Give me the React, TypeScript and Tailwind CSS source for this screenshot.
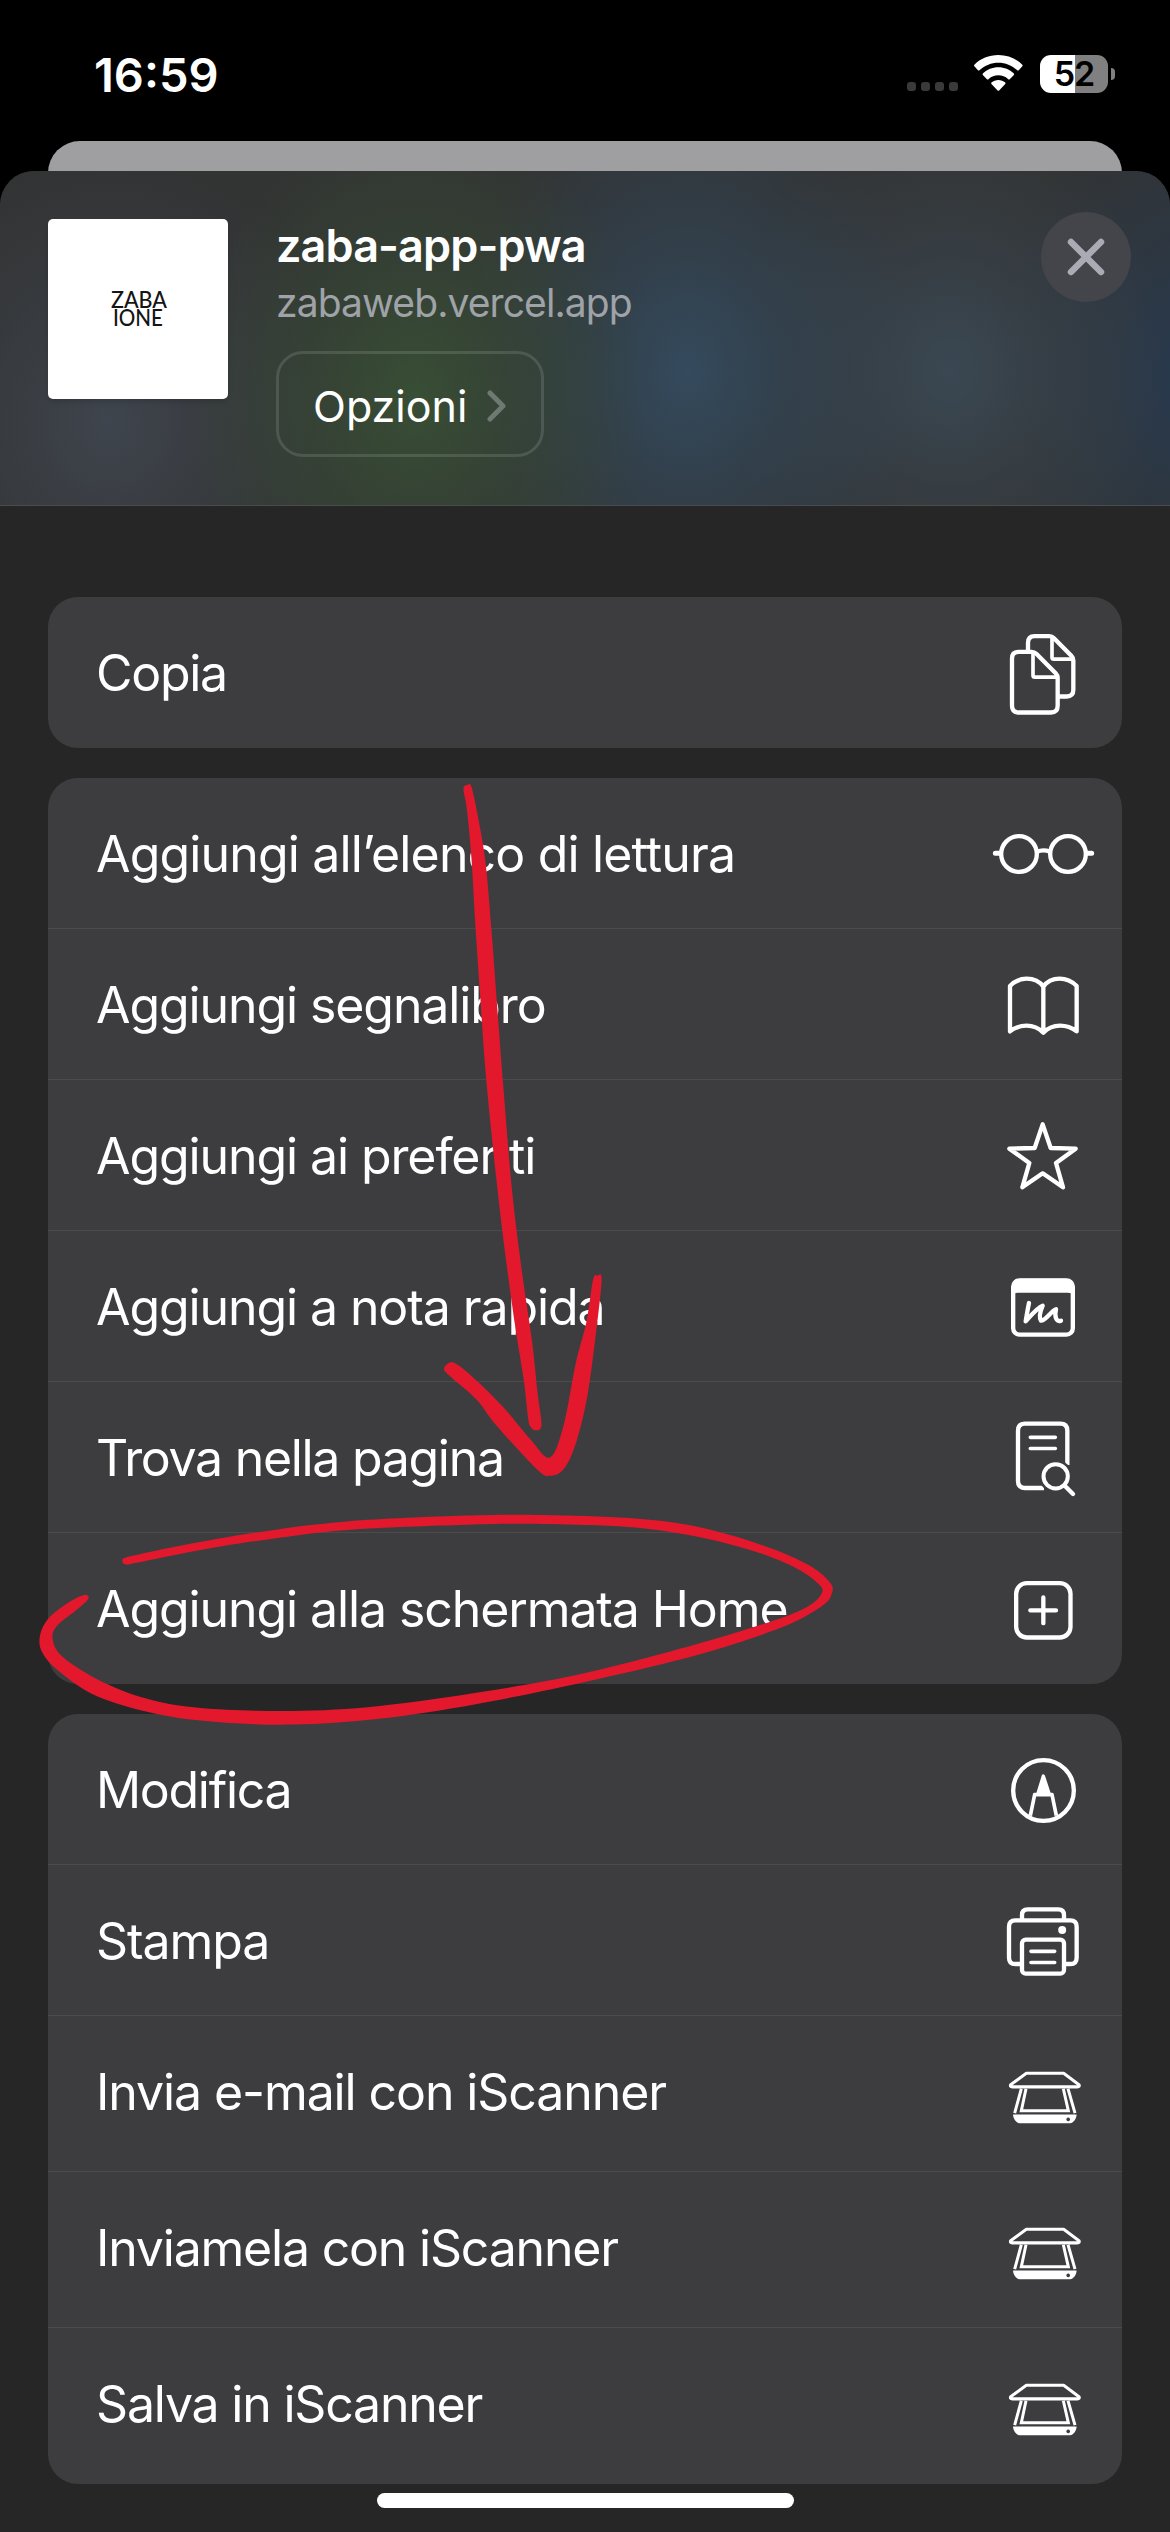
import React from "react";

type Pt = [number, number];

/** Closed Catmull-Rom curve through a list of points. */
function smooth(points: Pt[]): string {
  const n = points.length;
  let d = `M${points[0][0]} ${points[0][1]}`;
  for (let i = 0; i < n; i++) {
    const a = points[(i - 1 + n) % n];
    const b = points[i];
    const c = points[(i + 1) % n];
    const e = points[(i + 2) % n];
    d += `C${b[0] + (c[0] - a[0]) / 6} ${b[1] + (c[1] - a[1]) / 6} ${c[0] - (e[0] - b[0]) / 6} ${c[1] - (e[1] - b[1]) / 6} ${c[0]} ${c[1]}`;
  }
  return d + "Z";
}

const SHAFT: Pt[] = [
  [463.5, 789], [467, 810], [471.5, 859], [475.3, 924], [480, 993], [486, 1077], [496.5, 1180], [504.6, 1249],
  [515, 1325], [523.6, 1379], [528, 1417], [530, 1426], [535.5, 1430.3], [541.5, 1425], [537.7, 1394], [532, 1341], [522, 1272],
  [512, 1190], [503.5, 1089], [497.6, 1012], [491.6, 932], [485.6, 863], [478, 817], [471.5, 787], [467.5, 785],
];

const HEAD: Pt[] = [
  [444, 1369], [451, 1377], [477, 1400], [496, 1425], [536.6, 1469], [550, 1475.8], [563.7, 1469], [575.6, 1444],
  [587, 1398], [596, 1333], [601.6, 1280], [597.3, 1275.7], [593, 1280], [586.4, 1322], [575.6, 1364], [563.7, 1425],
  [550, 1457.5], [531, 1440], [504, 1408], [477, 1381], [458, 1365], [450, 1362.5],
];

const LOOP: Pt[] = [
  [122.5, 1559.5], [126, 1557.5], [136, 1555], [184, 1545], [260, 1532], [347, 1521.4], [466, 1515.6], [542, 1514.9], [628.7, 1518], [693.8, 1526],
  [758.8, 1544], [807.6, 1564.6], [829.3, 1581.8], [832, 1593], [821, 1606.7], [780.5, 1627.8], [699, 1654.5],
  [596, 1679.4], [477, 1704], [379.4, 1718.8], [292.7, 1724.6], [216.8, 1722], [157, 1714], [97.6, 1696.6],
  [59.6, 1671.8], [42.3, 1652.6], [40, 1635.4], [48.8, 1618], [67.8, 1603], [84, 1595], [88.3, 1599], [75.9, 1610.5],
  [57, 1625.8], [52.6, 1639], [62.3, 1656.5], [97.6, 1679.4], [146.3, 1698.6], [200.5, 1708], [292.7, 1711],
  [379.4, 1706], [487.8, 1691], [585.4, 1673], [693.8, 1645], [769.6, 1622], [807.6, 1606.7], [821.7, 1593.3],
  [818.4, 1583.8], [796.7, 1568.4], [753.4, 1551], [693.8, 1536], [628.7, 1527], [542, 1524], [466, 1524.8],
  [347, 1530], [260, 1540.5], [200.5, 1550], [138, 1562.5], [127, 1564.5], [123, 1563],
];

function Icon({ box, children }: { box: string; children: React.ReactNode }) {
  return (
    <svg
      viewBox={box}
      className="h-[110px] w-[110px] shrink-0"
      fill="none"
      stroke="white"
      strokeWidth={13}
      strokeLinecap="round"
      strokeLinejoin="round"
    >
      {children}
    </svg>
  );
}

const Copy = () => (
  <Icon box="84 82.5 330 330">
    <path d="M204 184V157Q204 137 224 137H268Q276 137 282 143L334 196Q340 202 340 210V298Q340 318 320 318H293" strokeLinecap="butt" />
    <path d="M276 140V200Q276 206 282 206H338" strokeWidth={11} />
    <path d="M176 184H215Q223 184 229 190L287 248Q293 254 293 262V346Q293 366 273 366H176Q156 366 156 346V204Q156 184 176 184Z" />
    <path d="M219 188V254Q219 260 225 260H290" strokeWidth={11} />
  </Icon>
);

const Glasses = () => (
  <Icon box="84 624 330 330">
    <circle cx="177" cy="792" r="53.5" />
    <circle cx="324" cy="792" r="53.5" />
    <path d="M231 785Q250 777 270 785" strokeLinecap="butt" />
    <path d="M106 790H121M380 790H395" strokeWidth={15} />
  </Icon>
);

const Book = () => (
  <Icon box="84 1077 330 330">
    <path d="M150 1324V1188Q172 1166 200 1166Q233 1166 250 1190Q267 1166 299 1166Q328 1166 350 1188V1324Q328 1307 300 1307Q271 1307 250 1328Q229 1307 200 1307Q172 1307 150 1324ZM250 1190V1324" />
  </Icon>
);

const Star = () => (
  <Icon box="84 60 330 330">
    <path d="M248 133L272 204L347 206L288 249L309 322L248 280L187 322L208 249L148 206L224 204Z" />
  </Icon>
);

const QuickNote = () => (
  <Icon box="84 513 330 330">
    <rect x="159.500" y="601" width="179" height="163" rx="19" />
    <path d="M160 638V622Q160 601 182 601H316Q338 601 338 622V638Q336 633 322 633H176Q162 633 160 638Z" fill="white" strokeWidth={10} />
    <path d="M207 669C203 688 200 706 197 724C212 708 230 684 248 677C240 696 237 714 243 722C258 722 272 694 288 688C283 708 288 728 303 722" strokeWidth={13} />
  </Icon>
);

const FindInPage = () => (
  <Icon box="84 66 330 330">
    <path d="M322 255V152Q322 131 301 131H195Q174 131 174 152V303Q174 324 195 324H252" strokeLinecap="butt" />
    <path d="M211 172H286M211 205.500H286" strokeWidth={11} />
    <circle cx="287" cy="289" r="50" fill="#3d3d3f" stroke="none" />
    <circle cx="287" cy="289" r="36.500" strokeWidth={12} />
    <path d="M315 318L339 342" strokeWidth={13} />
  </Icon>
);

const AddHome = () => (
  <Icon box="84 520.5 330 330">
    <rect x="168.500" y="608" width="163" height="163" rx="32" />
    <path d="M250 651V728M211 689.500H288" />
  </Icon>
);

const Markup = () => (
  <Icon box="84 102 330 330">
    <circle cx="250.500" cy="271.500" r="91" />
    <path d="M211 347L224 284H276L289 347" strokeWidth={11} strokeLinecap="butt" />
    <path d="M250 228L267 280H234Z" fill="white" strokeWidth={10} />
  </Icon>
);

const Printer = () => (
  <Icon box="84 555 330 330">
    <path d="M186 660V645Q186 628 203 628H295Q312 628 312 645V660" strokeLinecap="butt" />
    <path d="M186 792H166Q147 792 147 773V680Q147 661 166 661H331Q350 661 350 680V773Q350 792 331 792H312" strokeLinecap="butt" />
    <rect x="186" y="719" width="126" height="102" rx="11" />
    <path d="M213 754H284M213 787.500H284" strokeWidth={11} />
    <circle cx="306.500" cy="690" r="12" fill="white" stroke="none" />
  </Icon>
);

const Scanner = () => (
  <Icon box="84 115.5 330 330">
    <g transform="scale(1 1.018)">
      <path d="M199 214.500H311L357 248Q360 254 352 254.500H157Q149 254 152 248Z" strokeWidth={9} />
      <path d="M184 260L164 332M324 260L345 332" strokeWidth={9} strokeLinecap="butt" />
      <path d="M198 260L184 325H325L310 260" strokeWidth={9} strokeLinecap="butt" strokeLinejoin="miter" />
      <path
        d="M159 336H350Q349 350 338 359Q335 362 330 362H179Q174 362 171 359Q160 350 159 336ZM324.500 345a5.500 5.500 0 1 0 .1 0Z"
        fill="white"
        fillRule="evenodd"
        stroke="none"
      />
    </g>
  </Icon>
);

type Item = { label: string; icon: () => React.ReactElement; row: string; text: string };

const short = "h-[151px]";
const tall = "h-[156px]";

const GROUPS: Item[][] = [
  [{ label: "Copia", icon: Copy, row: short, text: "tracking-[-1.3px]" }],
  [
    { label: "Aggiungi all’elenco di lettura", icon: Glasses, row: short, text: "tracking-[-0.85px]" },
    { label: "Aggiungi segnalibro", icon: Book, row: short, text: "tracking-[-1.1px]" },
    { label: "Aggiungi ai preferiti", icon: Star, row: short, text: "tracking-[-1.1px]" },
    { label: "Aggiungi a nota rapida", icon: QuickNote, row: short, text: "tracking-[-1.1px]" },
    { label: "Trova nella pagina", icon: FindInPage, row: short, text: "tracking-[-1.3px]" },
    { label: "Aggiungi alla schermata Home", icon: AddHome, row: short, text: "tracking-[-1.1px]" },
  ],
  [
    { label: "Modifica", icon: Markup, row: short, text: "tracking-[-1.3px]" },
    { label: "Stampa", icon: Printer, row: short, text: "tracking-[-1.1px]" },
    { label: "Invia e-mail con iScanner", icon: Scanner, row: tall, text: "tracking-[-1.1px]" },
    { label: "Inviamela con iScanner", icon: Scanner, row: tall, text: "tracking-[-1.2px]" },
    { label: "Salva in iScanner", icon: Scanner, row: tall, text: "tracking-[-1.2px]" },
  ],
];

function StatusBar() {
  return (
    <div className="flex h-[141px] items-start justify-between pl-[94px] pr-[55px] pt-[46px]">
      <span className="text-[47px] leading-[57px] font-semibold">16:59</span>
      <div className="flex items-start pt-[9px]">
        <div className="mt-[27px] flex gap-[5px]">
          {[0, 1, 2, 3].map((i) => (
            <span key={i} className="size-[9px] rounded-[3px] bg-[#3a3a3a]" />
          ))}
        </div>
        <svg viewBox="284 75 146 109" className="ml-[16px] h-[36.300px] w-[48.700px]" fill="white">
          <path d="M357 75C385 75 411 86 429 104Q431 107 429 109L419 120Q416 123 413 120C398 106 378 98 357 98C336 98 316 106 301 120Q298 123 295 120L285 109Q283 107 285 104C303 86 329 75 357 75Z" />
          <path d="M357 112C375 112 391 119 403 130Q406 133 403 136L392 147Q389 150 386 147C378 140 368 136 357 136C346 136 336 140 328 147Q325 150 322 147L311 136Q308 133 311 130C323 119 339 112 357 112Z" />
          <path d="M357 150C365 150 372 153 377 157Q380 160 377 163L360 181Q357 184 354 181L337 163Q334 160 337 157C342 153 349 150 357 150Z" />
        </svg>
        <div className="ml-[17px] flex h-[38px] w-[68px] items-center justify-center rounded-[11px] bg-[linear-gradient(90deg,#fff_51.500%,#808080_51.500%)]">
          <span className="text-[34px] leading-[38px] font-semibold tracking-[-1px] text-black">52</span>
        </div>
        <span className="mt-[13px] ml-[3px] h-[12px] w-[4px] rounded-r-[4px] bg-[#808080]" />
      </div>
    </div>
  );
}

function Header() {
  return (
    <header className="flex h-[335px] items-start rounded-t-[34px] border-b border-[#4a4b4d] bg-[#323333] bg-[radial-gradient(ellipse_230px_290px_at_415px_225px,#384e35_0%,#374b3599_42%,#374b3500_100%),radial-gradient(ellipse_230px_300px_at_688px_200px,#344a5d_0%,#32475999_42%,#32475900_100%),radial-gradient(ellipse_220px_260px_at_950px_200px,#3a4853_0%,#3a465088_45%,#3a465000_100%),radial-gradient(ellipse_190px_290px_at_1190px_205px,#27394f_0%,#293a4e88_45%,#293a4e00_100%),radial-gradient(ellipse_240px_270px_at_110px_250px,#3f454e_0%,#3d424a88_45%,#3d424a00_100%)] pt-[48px] pl-[48px] pr-[39px]">
      <div className="flex size-[180px] items-center justify-center rounded-[5px] bg-white shadow-md">
        <svg viewBox="0 0 60 40" className="h-[40px] w-[60px] overflow-visible" fill="#151515">
          <text x="3" y="18.500" fontSize="23.500" fontWeight="500" fontFamily="Lato, sans-serif" textLength="56" lengthAdjust="spacingAndGlyphs">ZABA</text>
          <text x="5" y="37.300" fontSize="23.500" fontWeight="500" fontFamily="Lato, sans-serif" textLength="50" lengthAdjust="spacingAndGlyphs">IONE</text>
        </svg>
      </div>
      <div className="ml-[48px] flex flex-1 flex-col items-start">
        <h1 className="text-[45px] leading-[54px] font-semibold tracking-[-0.9px]">zaba-app-pwa</h1>
        <p className="mt-[3px] text-[39px] leading-[54px] tracking-[-0.9px] text-[#9fa3a8]">zabaweb.vercel.app</p>
        <button className="mt-[21px] flex h-[106px] w-[268px] items-center rounded-[27px] border-[3px] border-white/12 pl-[34px] pt-[3px]">
          <span className="text-[43px] leading-[54px]">Opzioni</span>
          <svg viewBox="0 0 20 32" className="ml-[20px] h-[32px] w-[20px]" fill="none" stroke="#6d7971" strokeWidth="5" strokeLinecap="round" strokeLinejoin="round">
            <path d="M3 3L16 16L3 29" />
          </svg>
        </button>
      </div>
      <button aria-label="Chiudi" className="-mt-[7px] flex size-[90px] items-center justify-center rounded-full bg-[#43454a]">
        <svg viewBox="0 0 38 38" className="size-[38px]" stroke="#a9abb5" strokeWidth="6.500" strokeLinecap="round">
          <path d="M4 4L34 34M34 4L4 34" />
        </svg>
      </button>
    </header>
  );
}

export default function App() {
  return (
    <div className="relative flex h-[2532px] w-[1170px] flex-col overflow-hidden bg-black font-['Inter',sans-serif] text-white">
      <StatusBar />
      <div className="mx-[48px] -mb-[40px] h-[70px] shrink-0 rounded-t-[32px] bg-[#9f9fa1]" />
      <div className="relative flex flex-1 flex-col rounded-t-[34px] bg-[#262627]">
        <Header />
        <main className="flex flex-col gap-[30px] px-[48px] pt-[91px]">
          {GROUPS.map((items, g) => (
            <ul key={g} className="overflow-hidden rounded-[30px] bg-[#3d3d3f]">
              {items.map(({ label, icon: Glyph, row, text }, i) => (
                <li key={i} className={`${row} flex items-center justify-between border-[#4b4b4e] pl-[48px] pr-[24px] not-last:border-b`}>
                  <span className={`${text} mt-[46px] self-start text-[50px] leading-[60px]`}>{label}</span>
                  <Glyph />
                </li>
              ))}
            </ul>
          ))}
        </main>
      </div>
      <div className="absolute bottom-[24px] left-[377px] h-[15px] w-[417px] rounded-full bg-white" />
      <svg viewBox="0 0 1170 2532" className="pointer-events-none absolute inset-0 h-full w-full" fill="#e4182c">
        <path d={smooth(SHAFT)} />
        <path d={smooth(HEAD)} />
        <path d={smooth(LOOP)} />
      </svg>
    </div>
  );
}
